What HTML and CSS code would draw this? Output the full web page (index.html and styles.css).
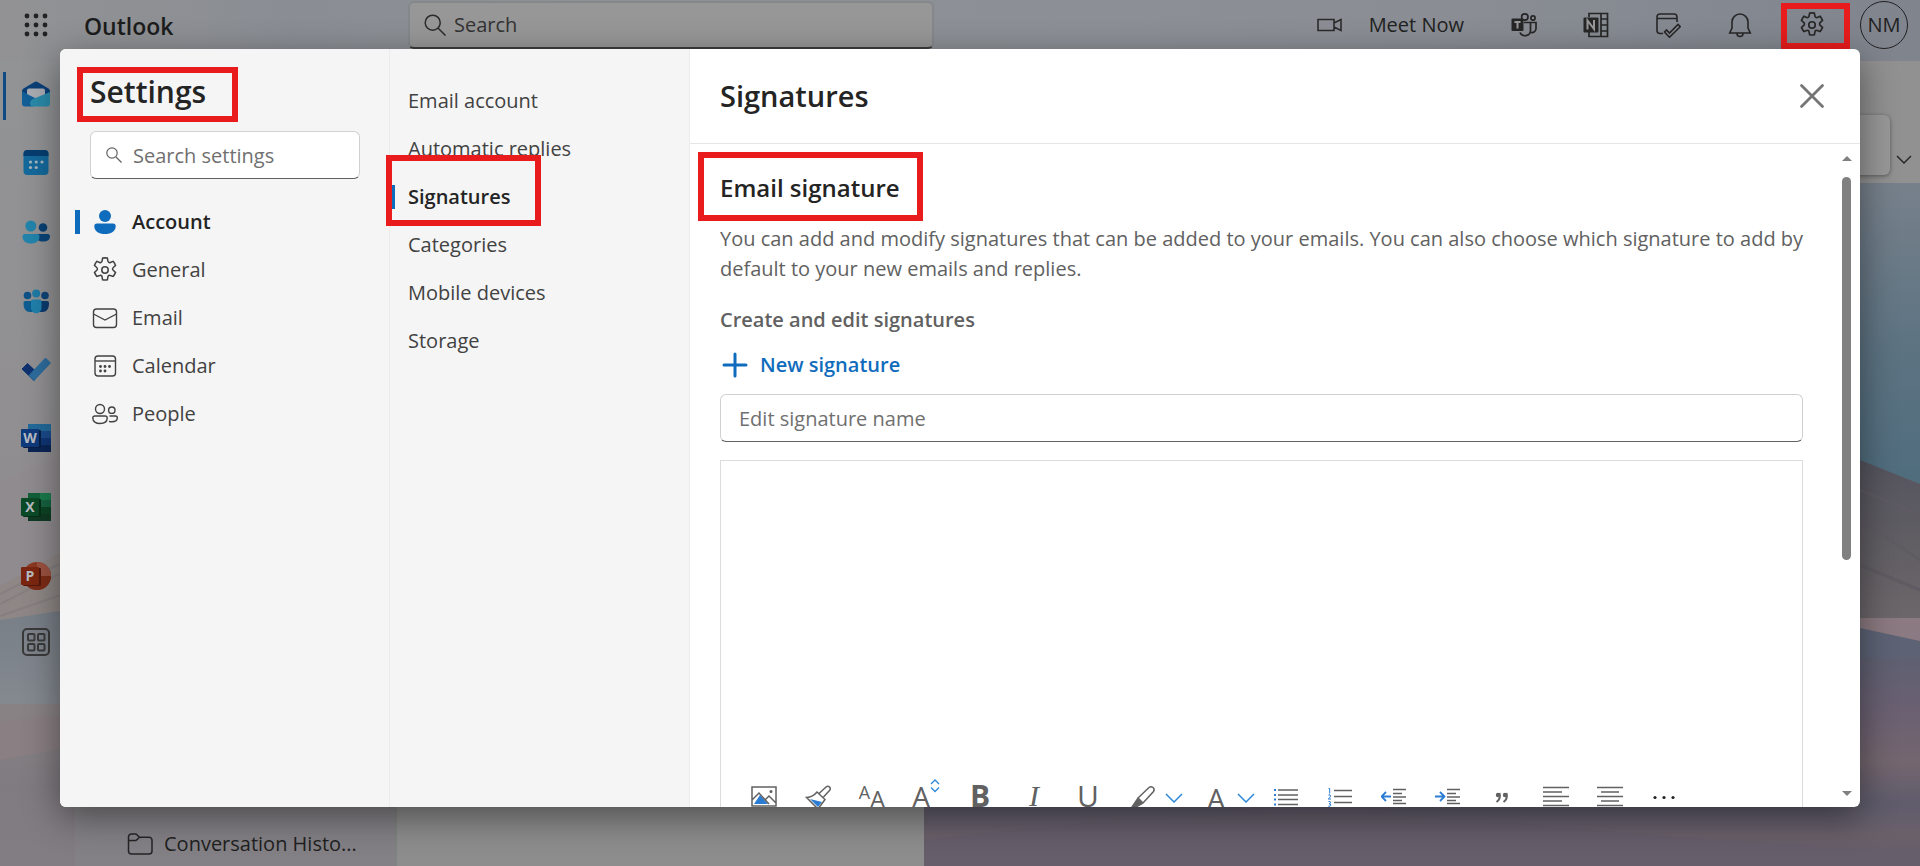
FILE: index.html
```html
<!DOCTYPE html>
<html lang="en">
<head>
    <meta charset="utf-8">
    <title>Outlook - Settings</title>
    <link rel="stylesheet" href="styles.css">
</head>
<body>
    <div class="app">
        <svg class="wallpaper" viewBox="0 0 1920 866" preserveAspectRatio="none" aria-hidden="true">
            <defs>
                <linearGradient id="sky" x1="0" y1="0" x2="0" y2="1">
                    <stop offset="0" stop-color="#858a95"/>
                    <stop offset="0.22" stop-color="#76808b"/>
                    <stop offset="0.4" stop-color="#5d7382"/>
                    <stop offset="0.55" stop-color="#506d7e"/>
                </linearGradient>
                <linearGradient id="mist" x1="0" y1="0" x2="0" y2="1">
                    <stop offset="0" stop-color="#929496"/>
                    <stop offset="0.65" stop-color="#918f91"/>
                    <stop offset="1" stop-color="#8c888a"/>
                </linearGradient>
                <linearGradient id="lake" x1="0" y1="0" x2="0" y2="1">
                    <stop offset="0" stop-color="#787e87"/>
                    <stop offset="1" stop-color="#858a90"/>
                </linearGradient>
                <linearGradient id="duneRight" x1="0" y1="0" x2="0" y2="1">
                    <stop offset="0" stop-color="#51515c"/>
                    <stop offset="1" stop-color="#6e696b"/>
                </linearGradient>
                <linearGradient id="sand" x1="0" y1="0" x2="0" y2="1">
                    <stop offset="0" stop-color="#8a8385"/>
                    <stop offset="0.5" stop-color="#7f7b80"/>
                    <stop offset="1" stop-color="#827d83"/>
                </linearGradient>
                <linearGradient id="sandRight" x1="0" y1="0" x2="0" y2="1">
                    <stop offset="0" stop-color="#5f6072"/>
                    <stop offset="0.25" stop-color="#6a6072"/>
                    <stop offset="0.5" stop-color="#74666f"/>
                    <stop offset="0.7" stop-color="#5f5c6c"/>
                    <stop offset="0.85" stop-color="#6a606a"/>
                    <stop offset="1" stop-color="#625c6a"/>
                </linearGradient>
            </defs>
            <rect width="1920" height="866" fill="url(#sky)"/>
            <rect width="200" height="640" fill="url(#mist)"/>
            <path d="M0 482L75 450V570L0 600z" fill="#8f8b8e"/>
            <path d="M0 586L75 545V620L0 640z" fill="#8e8786"/>
            <path d="M0 594L75 556M0 604L75 566M0 616L75 590" stroke="#867f80" stroke-width="2" fill="none"/>
            <path d="M0 620L100 605V710H0z" fill="url(#lake)"/>
            <path d="M0 704H200V866H0z" fill="url(#sand)"/>
            <path d="M0 722L75 714V746L0 760z" fill="#8a7f83"/>
            <path d="M1700 430Q1830 440 1860 460L1920 484V640H1700z" fill="url(#duneRight)"/>
            <path d="M1860 490L1920 515M1860 520L1920 560M1860 565L1920 590" stroke="#5f5b63" stroke-width="3" fill="none"/>
            <path d="M1700 618H1920V650H1700z" fill="#8b7a81"/>
            <path d="M1700 610L1860 628L1920 641V670H1700z" fill="#5d6375"/>
            <path d="M900 658H1920V866H900z" fill="url(#sandRight)"/>
            <path d="M924 840Q1250 800 1500 822T1920 852V866H924z" fill="#665e6b"/>
        </svg>

        <header class="topbar">
            <button class="waffle" aria-label="App launcher">
                <svg width="24" height="24" viewBox="0 0 24 24" fill="#222"><circle cx="3" cy="3" r="2.4"/><circle cx="12" cy="3" r="2.4"/><circle cx="21" cy="3" r="2.4"/><circle cx="3" cy="12" r="2.4"/><circle cx="12" cy="12" r="2.4"/><circle cx="21" cy="12" r="2.4"/><circle cx="3" cy="21" r="2.4"/><circle cx="12" cy="21" r="2.4"/><circle cx="21" cy="21" r="2.4"/></svg>
            </button>
            <span class="brand">Outlook</span>
            <label class="top-search">
                <svg width="22" height="22" viewBox="0 0 24 24" fill="none" stroke="#2b2b2b" stroke-width="1.6"><circle cx="9.5" cy="9.5" r="8.2"/><path d="M15.5 15.5l8 8"/></svg>
                <input type="text" placeholder="Search" aria-label="Search">
            </label>
            <button class="meet">
                <svg width="26" height="26" viewBox="0 0 26 26" fill="none" stroke="#2b2b2b" stroke-width="1.6"><path d="M1 7.5h16v11H1zM17 11l7-3.5v11L17 15"/></svg>
                Meet Now
            </button>
            <button class="top-btn" aria-label="Teams">
                <svg width="26" height="26" viewBox="0 0 26 26" fill="none" stroke="#262626" stroke-width="1.7"><circle cx="13.8" cy="5" r="3.2"/><circle cx="22" cy="6" r="2.1"/><path d="M13 10.5h6.500v8a5.500 5.500 0 0 1-10.500 2M19.500 10.500H25v6.500a4 4 0 0 1-5.500 3.200"/><rect x="0.5" y="6.500" width="12" height="12.500" rx="1" fill="#262626" stroke="none"/><path d="M3.500 10h6M6.500 10v6.500" stroke="#999" stroke-width="2"/></svg>
            </button>
            <button class="top-btn" aria-label="OneNote">
                <svg width="26" height="26" viewBox="0 0 26 26" fill="none" stroke="#262626" stroke-width="1.7"><path d="M6 5V1.500h18.500v23H6V20M18 1.500v23M18 7h6.500M18 13h6.500M18 19h6.500"/><rect x="0.5" y="5.500" width="15" height="15" rx="1" fill="#262626" stroke="none"/><path d="M4.500 17.500V8.500l6.500 8.500V8" stroke="#999" stroke-width="2"/></svg>
            </button>
            <button class="top-btn" aria-label="My Day">
                <svg width="26" height="26" viewBox="0 0 26 26" fill="none" stroke="#262626" stroke-width="1.6"><path d="M8 21.500H5a3 3 0 0 1-3-3V5a3 3 0 0 1 3-3h14a3 3 0 0 1 3 3v5M2 6.500h20"/><path d="M9.500 20l2-2 3 3 8.500-8.500 2.200 2.200-10.700 10.500z"/></svg>
            </button>
            <button class="top-btn" aria-label="Notifications">
                <svg width="26" height="26" viewBox="0 0 26 26" fill="none" stroke="#262626" stroke-width="1.6"><path d="M13 2a8 8 0 0 0-8 8v6l-2.300 5h20.600L21 16v-6a8 8 0 0 0-8-8zM10 21.500a3 3 0 0 0 6 0"/></svg>
            </button>
            <button class="top-btn" aria-label="Settings">
                <svg width="26" height="26" viewBox="0.7 0.7 18.6 18.6" fill="none" stroke="#262626" stroke-width="1.2"><circle cx="10" cy="10" r="2.3"/><path d="M8.3 1.5a9 9 0 0 1 3.400 0l.4 2.100a1.200 1.200 0 0 0 1.700 1l2-.8a9 9 0 0 1 1.700 3l-1.600 1.400a1.300 1.300 0 0 0 0 2l1.600 1.500a9 9 0 0 1-1.700 2.900l-2-.7a1.200 1.200 0 0 0-1.700 1l-.4 2.100a9 9 0 0 1-3.400 0l-.4-2.100a1.200 1.200 0 0 0-1.700-1l-2 .7a9 9 0 0 1-1.700-2.900l1.600-1.500a1.300 1.300 0 0 0 0-2L2.500 6.800a9 9 0 0 1 1.700-3l2 .8a1.200 1.200 0 0 0 1.700-1z"/></svg>
                <span class="mark mark-gear"></span>
            </button>
            <button class="top-btn" aria-label="Account manager"><span class="avatar">NM</span></button>
        </header>

        <div class="workspace">
            <nav class="rail" aria-label="Apps">
                <a href="#" class="rail-item active" aria-label="Mail">
                    <svg width="30" height="30" viewBox="0 0 30 30"><path d="M1 12Q1 10.500 2.500 9.500L13.500 3q1.500-1 3 0l11 6.500Q29 10.500 29 12v4H1z" fill="#0a3f78"/><path d="M6 11.500a2 2 0 0 1 2-2h14a2 2 0 0 1 2 2V20H6z" fill="#a9acb2"/><path d="M1 12.500l16 8-5 7H4a3 3 0 0 1-3-3z" fill="#115f97"/><path d="M29 13l-17 7a5 5 0 0 0-2 7.500h16a3 3 0 0 0 3-3z" fill="#2a8aa9"/></svg>
                </a>
                <a href="#" class="rail-item" aria-label="Calendar">
                    <svg width="30" height="30" viewBox="0 0 30 30"><rect x="2.5" y="3" width="25" height="25" rx="4" fill="#14699c"/><path d="M2.500 9V7a4 4 0 0 1 4-4h17a4 4 0 0 1 4 4v2z" fill="#073e70"/><g fill="#a8b4bc"><circle cx="9.5" cy="15" r="1.6"/><circle cx="15.2" cy="15" r="1.6"/><circle cx="21" cy="15" r="1.6"/><circle cx="9.5" cy="20.500" r="1.6"/><circle cx="15.2" cy="20.500" r="1.6"/></g></svg>
                </a>
                <a href="#" class="rail-item" aria-label="People">
                    <svg width="30" height="30" viewBox="0 -2 30 30"><circle cx="22" cy="9.500" r="4.300" fill="#0a4173"/><path d="M16 16h10.500a2.500 2.500 0 0 1 2.500 2.500c0 3-2.500 5-7 5s-6-2-6-5z" fill="#0a4478"/><circle cx="9.800" cy="8" r="5.500" fill="#2384ab"/><path d="M4 16h12a2.500 2.500 0 0 1 2.500 2.500c0 4.500-3.500 7-8.500 7s-8.500-2.500-8.500-7A2.500 2.500 0 0 1 4 16z" fill="#2384ab"/></svg>
                </a>
                <a href="#" class="rail-item" aria-label="Groups">
                    <svg width="30" height="30" viewBox="0 -1 30 30"><circle cx="6.500" cy="9.500" r="3.800" fill="#0d5288"/><circle cx="24" cy="9.500" r="3.800" fill="#0d4478"/><path d="M2.500 17a2 2 0 0 1 2-2H12v11H9c-4 0-6.500-3-6.500-9z" fill="#0f5d92"/><path d="M28 17a2 2 0 0 0-2-2h-8v11h3.500c4 0 6.500-3 6.500-9z" fill="#0a3a6e"/><circle cx="15.2" cy="7.500" r="4" fill="#1e7ba5"/><path d="M10 15.500a2 2 0 0 1 2-2h6.500a2 2 0 0 1 2 2V22a5 5 0 0 1-10.500 0z" fill="#1f80ab"/></svg>
                </a>
                <a href="#" class="rail-item" aria-label="To Do">
                    <svg width="30" height="30" viewBox="0 0 30 30"><path d="M6.500 9.500l8.500 8-2 9L1 15z" fill="#0f3270" stroke="#0f3270" stroke-linejoin="round"/><path d="M24.500 4L29.500 9 13 26.500 8 21.500z" fill="#2e6c9c" stroke="#2e6c9c" stroke-linejoin="round"/></svg>
                </a>
                <a href="#" class="rail-item" aria-label="Word">
                    <svg class="office" width="30" height="30" viewBox="0 0 30 30"><rect x="7" y="1" width="23" height="7" fill="#236a9a"/><rect x="7" y="8" width="23" height="7" fill="#1a4a8a"/><rect x="7" y="15" width="23" height="7" fill="#0f3675"/><rect x="7" y="22" width="23" height="7" fill="#0a2556"/><rect x="2" y="7" width="18" height="18" rx="1" fill="#082047"/><rect x="0" y="6" width="18" height="18" rx="1" fill="#0f3a7c"/><text x="9" y="20" text-anchor="middle">W</text></svg>
                </a>
                <a href="#" class="rail-item" aria-label="Excel">
                    <svg class="office" width="30" height="30" viewBox="0 0 30 30"><rect x="7" y="1" width="12" height="28" fill="#12603a"/><rect x="19" y="1" width="11" height="7" fill="#1c7a4c"/><rect x="19" y="8" width="11" height="7" fill="#166240"/><rect x="7" y="15" width="23" height="7" fill="#0c4424"/><rect x="7" y="22" width="23" height="7" fill="#0f3a22"/><rect x="2" y="7" width="18" height="18" rx="1" fill="#06301a"/><rect x="0" y="6" width="18" height="18" rx="1" fill="#0b4a27"/><text x="9" y="20" text-anchor="middle">X</text></svg>
                </a>
                <a href="#" class="rail-item" aria-label="PowerPoint">
                    <svg class="office" width="30" height="30" viewBox="0 0 30 30"><circle cx="16" cy="15" r="14" fill="#8c3a22"/><path d="M16 1a14 14 0 0 1 14 14H16z" fill="#9c5240"/><path d="M30 15a14 14 0 0 1-28 0z" fill="#7c2c16"/><rect x="2" y="7" width="18" height="18" rx="1" fill="#54190c"/><rect x="0" y="6" width="18" height="18" rx="1" fill="#7c2611"/><text x="9" y="20" text-anchor="middle">P</text></svg>
                </a>
                <a href="#" class="rail-item more" aria-label="More apps">
                    <svg width="30" height="30" viewBox="0 0 30 30" fill="none" stroke="#3a3a3a" stroke-width="2"><rect x="2" y="2" width="26" height="26" rx="4"/><rect x="7" y="7" width="6.5" height="6.5" rx="1"/><rect x="17" y="7" width="6.5" height="6.5" rx="1"/><rect x="7" y="17" width="6.5" height="6.5" rx="1"/><rect x="17" y="17" width="6.5" height="6.5" rx="1"/></svg>
                </a>
            </nav>
            <div class="mailbox">
                <div class="ribbon">
                    <div class="ribbon-card"></div>
                    <button class="ribbon-toggle" aria-label="Ribbon options">
                        <svg width="16" height="10" viewBox="0 0 16 10" fill="none" stroke="#222" stroke-width="1.4"><path d="M1 1l7 7 7-7"/></svg>
                    </button>
                </div>
                <div class="panes">
                    <aside class="folders">
                        <a href="#" class="folder">
                            <svg width="26" height="24" viewBox="0 0 26 24" fill="none" stroke="#242424" stroke-width="1.5"><path d="M1.500 5a3 3 0 0 1 3-3h4.500l3.500 3.200H22a3 3 0 0 1 3 3V19a3 3 0 0 1-3 3H4.500a3 3 0 0 1-3-3zM1.500 8.500H9l3.500-3.300"/></svg>
                            <span>Conversation Histo...</span>
                        </a>
                    </aside>
                    <section class="messages"></section>
                </div>
            </div>
        </div>
    </div>

    <div class="modal" role="dialog" aria-label="Settings">
        <aside class="settings-nav">
            <h1>Settings<span class="mark mark-settings"></span></h1>
            <label class="settings-search">
                <svg width="16" height="16" viewBox="0 0 16 16" fill="none" stroke="#616161" stroke-width="1.2"><circle cx="6" cy="6" r="5.2"/><path d="M10 10l5.500 5.500"/></svg>
                <input type="text" placeholder="Search settings" aria-label="Search settings">
            </label>
            <nav>
                <a href="#" class="nav-item active">
                    <svg width="26" height="26" viewBox="0 0 26 26" fill="#0f6cbd"><circle cx="13" cy="7" r="6"/><path d="M5 14.500h16a2.700 2.700 0 0 1 2.700 2.700c0 5-4.700 7.800-10.700 7.800S2.300 22.200 2.300 17.200A2.700 2.700 0 0 1 5 14.500z"/></svg>
                    Account
                </a>
                <a href="#" class="nav-item">
                    <svg width="26" height="26" viewBox="0.7 0.7 18.6 18.6" fill="none" stroke="#424242" stroke-width="1.1"><circle cx="10" cy="10" r="2.3"/><path d="M8.3 1.5a9 9 0 0 1 3.400 0l.4 2.100a1.200 1.200 0 0 0 1.700 1l2-.8a9 9 0 0 1 1.700 3l-1.600 1.400a1.300 1.300 0 0 0 0 2l1.600 1.500a9 9 0 0 1-1.700 2.900l-2-.7a1.200 1.200 0 0 0-1.700 1l-.4 2.100a9 9 0 0 1-3.400 0l-.4-2.100a1.200 1.200 0 0 0-1.700-1l-2 .7a9 9 0 0 1-1.700-2.900l1.600-1.500a1.300 1.300 0 0 0 0-2L2.500 6.800a9 9 0 0 1 1.700-3l2 .8a1.200 1.200 0 0 0 1.700-1z"/></svg>
                    General
                </a>
                <a href="#" class="nav-item">
                    <svg width="26" height="26" viewBox="0 0 26 26" fill="none" stroke="#424242" stroke-width="1.4"><rect x="1.5" y="4" width="23" height="18.500" rx="3"/><path d="M1.500 9L13 15l11.500-6"/></svg>
                    Email
                </a>
                <a href="#" class="nav-item">
                    <svg width="26" height="26" viewBox="0 0 26 26" fill="none" stroke="#424242" stroke-width="1.4"><rect x="3" y="3" width="20.500" height="20" rx="3"/><path d="M3 8h20.500"/><g fill="#424242" stroke="none"><circle cx="8.5" cy="13.500" r="1.4"/><circle cx="13" cy="13.500" r="1.4"/><circle cx="17.500" cy="13.500" r="1.4"/><circle cx="8.500" cy="18" r="1.4"/><circle cx="13" cy="18" r="1.4"/></g></svg>
                    Calendar
                </a>
                <a href="#" class="nav-item">
                    <svg width="26" height="26" viewBox="0 0 26 26" fill="none" stroke="#424242" stroke-width="1.4"><circle cx="8" cy="8" r="4.500"/><circle cx="19.800" cy="9.200" r="3.200"/><path d="M2.800 15h10.400a2 2 0 0 1 2 2c0 3.500-3 5.500-7.200 5.500S.8 20.500.8 17a2 2 0 0 1 2-2zM17.500 15h6a1.800 1.800 0 0 1 1.800 1.800c0 2.500-2 4-5.300 4a8 8 0 0 1-3-.5"/></svg>
                    People
                </a>
            </nav>
        </aside>

        <nav class="sub-nav" aria-label="Account settings">
            <a href="#">Email account</a>
            <a href="#">Automatic replies</a>
            <a href="#" class="active">Signatures<span class="mark mark-signatures"></span></a>
            <a href="#">Categories</a>
            <a href="#">Mobile devices</a>
            <a href="#">Storage</a>
        </nav>

        <main class="panel">
            <div class="panel-head">
                <h2>Signatures</h2>
                <button class="close" aria-label="Close">
                    <svg width="26" height="26" viewBox="0 0 26 26" fill="none" stroke="#757575" stroke-width="2.8" stroke-linecap="round"><path d="M2.500 2.500l21 21M23.500 2.500l-21 21"/></svg>
                </button>
            </div>
            <div class="panel-body">
                <div class="content">
                    <h3>Email signature<span class="mark mark-email"></span></h3>
                    <p>You can add and modify signatures that can be added to your emails. You can also choose which signature to add by default to your new emails and replies.</p>
                    <h4>Create and edit signatures</h4>
                    <button class="new-signature">
                        <svg width="26" height="26" viewBox="0 0 26 26" fill="none" stroke="#0f6cbd" stroke-width="3" stroke-linecap="round"><path d="M13 2v22M2 13h22"/></svg>
                        New signature
                    </button>
                    <input class="signature-name" type="text" placeholder="Edit signature name" aria-label="Edit signature name">
                    <div class="editor">
                        <textarea aria-label="Signature"></textarea>
                        <div class="toolbar">
                            <button aria-label="Insert picture"><svg width="26" height="26" viewBox="0 0 26 26" fill="none" stroke="#616161" stroke-width="1.5"><path d="M3 19l6-9 8 9z" fill="#2b7cd3" stroke="none"/><path d="M1 2h24v19H1zM1 15l7-7 10 11M14 15l4-4 7 7"/><circle cx="20" cy="6.500" r=".8"/></svg></button>
                            <button aria-label="Format painter"><svg width="26" height="26" viewBox="0 0 26 26" fill="none" stroke="#616161" stroke-width="1.5"><path d="M5 14l12 3-4 5z" fill="#2b7cd3" stroke="none"/><path d="M12 7l8 7.500-7 9.500L1.500 12.500Q8 12 12 7zM14 8.500l7-6.500q2-1.500 3.500 0t0 3.500l-6 6.500"/></svg></button>
                            <button class="glyph" aria-label="Font"><span class="font-s">A</span><span class="font-m">A</span></button>
                            <button class="glyph" aria-label="Font size"><span class="font-l">A</span><svg class="size-arrows" width="10" height="14" viewBox="0 0 10 14" fill="none" stroke="#2b88d8" stroke-width="1.3"><path d="M1 5l4-4 4 4M1 8.500l4 4 4-4"/></svg></button>
                            <button class="glyph bold" aria-label="Bold">B</button>
                            <button class="glyph italic" aria-label="Italic">I</button>
                            <button class="glyph" aria-label="Underline">U</button>
                            <button class="wide" aria-label="Highlight"><svg width="26" height="26" viewBox="0 0 26 26" fill="none" stroke="#616161" stroke-width="1.5"><path d="M7 13L18 2.500q2-1.500 4 0t.5 4L12 18zM7 13l5 5"/><path d="M6.500 14l4.500 4.500L5 22H1z" fill="#616161"/></svg><svg width="18" height="10" viewBox="0 0 18 10" fill="none" stroke="#2b88d8" stroke-width="1.5"><path d="M1 1l8 8 8-8"/></svg></button>
                            <button class="wide" aria-label="Font color"><span class="font-l">A</span><svg width="18" height="10" viewBox="0 0 18 10" fill="none" stroke="#2b88d8" stroke-width="1.5"><path d="M1 1l8 8 8-8"/></svg></button>
                            <button aria-label="Bullets"><svg width="26" height="26" viewBox="0 0 26 26" fill="none" stroke="#616161" stroke-width="1.5"><path d="M5 5h20M5 10h20M5 14.500h20M5 19.500h20"/><path d="M1 5h2M1 10h2M1 14.500h2M1 19.500h2" stroke="#2b7cd3" stroke-width="2"/></svg></button>
                            <button aria-label="Numbering"><svg width="26" height="26" viewBox="0 0 26 26" fill="none" stroke="#616161" stroke-width="1.5"><path d="M7 5.500h18M7 11.500h18M7 17.500h18"/><path d="M1.500 3.500h1.200v5M1.300 10q2.500-.8 2.200 1t-2.300 3h2.800M1.500 16.500q2.500-.3 2 1.200t-1.500 1q2 0 1.800 1.500t-2.500 1" stroke="#2b7cd3" stroke-width="1"/></svg></button>
                            <button aria-label="Decrease indent"><svg width="26" height="26" viewBox="0 0 26 26" fill="none" stroke="#616161" stroke-width="1.5"><path d="M12 4.500h13M12 8.500h9M12 12h13M12 15.500h9M12 18.500h13"/><path d="M10 11.500H.5M5 7L.5 11.500 5 16" stroke="#2b7cd3" stroke-width="1.8"/></svg></button>
                            <button aria-label="Increase indent"><svg width="26" height="26" viewBox="0 0 26 26" fill="none" stroke="#616161" stroke-width="1.5"><path d="M12 4.500h13M12 8.500h9M12 12h13M12 15.500h9M12 18.500h13"/><path d="M0 11.500h9.500M5 7l4.500 4.500L5 16" stroke="#2b7cd3" stroke-width="1.8"/></svg></button>
                            <button aria-label="Quote"><svg width="26" height="26" viewBox="0 0 26 26" fill="none" stroke="#616161" stroke-width="2"><circle cx="9" cy="10" r="2.2" fill="#616161" stroke="none"/><path d="M10.500 8q1.500 6-3 9"/><circle cx="16" cy="10" r="2.2" fill="#616161" stroke="none"/><path d="M17.500 8q1.500 6-3 9"/></svg></button>
                            <button aria-label="Align left"><svg width="26" height="26" viewBox="0 0 26 26" fill="none" stroke="#616161" stroke-width="1.5"><path d="M0 2.500h26M0 7h19M0 11.500h26M0 16h19M0 20.500h26"/></svg></button>
                            <button aria-label="Align center"><svg width="26" height="26" viewBox="0 0 26 26" fill="none" stroke="#616161" stroke-width="1.5"><path d="M0 2.500h26M4 7h18M0 11.500h26M4 16h18M0 20.500h26"/></svg></button>
                            <button aria-label="More options"><svg width="26" height="26" viewBox="0 0 26 26" fill="#222"><circle cx="4" cy="12.500" r="1.6"/><circle cx="13" cy="12.500" r="1.6"/><circle cx="22" cy="12.500" r="1.6"/></svg></button>
                        </div>
                    </div>
                </div>
                <div class="scrollbar" aria-hidden="true">
                    <span class="arrow-up"></span>
                    <span class="track"><span class="thumb"></span></span>
                    <span class="arrow-down"></span>
                </div>
            </div>
        </main>
    </div>
</body>
</html>
```

FILE: styles.css
```css
* {
    box-sizing: border-box;
}
html, body {
    height: 100%;
}
body {
    margin: 0;
    overflow: hidden;
    font-family: "Segoe UI", "Open Sans", "Noto Sans", sans-serif;
    font-size: 20px;
    line-height: 30px;
    color: #424242;
}
a {
    color: inherit;
    text-decoration: none;
}
button, input, textarea {
    font: inherit;
    color: inherit;
}
button {
    padding: 0;
    border: none;
    background: none;
    cursor: pointer;
}
input {
    min-width: 0;
    border: none;
    outline: none;
    background: none;
    padding: 0;
}
svg {
    flex: none;
    display: block;
}

/* page behind the dialog */
.app {
    position: relative;
    height: 100%;
    display: flex;
    flex-direction: column;
}
.wallpaper {
    position: absolute;
    inset: 0;
    width: 100%;
    height: 100%;
    z-index: -1;
}
.topbar {
    display: flex;
    align-items: flex-start;
    height: 61px;
    flex: none;
    padding-top: 1px;
    background: linear-gradient(to right, #929294 0, #8a8e94 15%, #8d9095 30%, #8c9096 60%, #8a8e94 75%, #80848d 100%);
    color: #222;
}
.topbar button {
    height: 48px;
}
.waffle {
    width: 71px;
    display: flex;
    align-items: center;
    justify-content: center;
}
.brand {
    width: 337px;
    padding: 10px 0 0 13px;
    font-size: 23px;
    font-weight: 600;
    color: #1c1c1c;
}
.top-search {
    display: flex;
    align-items: center;
    gap: 8px;
    width: 526px;
    height: 48px;
    padding: 0 16px 0 14px;
    background: #979797;
    border: 2px solid #85888b;
    border-bottom-color: #3c3c3c;
    border-radius: 6px;
}
.top-search input {
    flex: 1;
}
.top-search input::placeholder {
    color: #333;
    opacity: 1;
}
.meet {
    display: flex;
    align-items: center;
    gap: 26px;
    margin-left: auto;
    margin-right: 24px;
}
.top-btn {
    position: relative;
    width: 72px;
    display: flex;
    align-items: center;
    justify-content: center;
    color: #222;
}
.avatar {
    width: 48px;
    height: 48px;
    border: 1px solid #222;
    border-radius: 50%;
    line-height: 46px;
}
.workspace {
    flex: 1;
    min-height: 0;
    display: flex;
}
.rail {
    width: 75px;
    display: flex;
    flex-direction: column;
}
.rail-item {
    display: flex;
    align-items: center;
    height: 69px;
    padding-left: 21px;
}
.rail-item.active {
    height: 66px;
    padding-left: 18px;
    margin-left: 3px;
    background: linear-gradient(#0e4a84, #0e4a84) 0 11px / 3px 48px no-repeat;
}
.rail-item.more {
    height: 64px;
}
.office text {
    font-size: 14px;
    font-weight: 700;
    fill: #b8bcc2;
}
.mailbox {
    flex: 1;
    display: flex;
    flex-direction: column;
}
.ribbon {
    height: 122px;
    display: flex;
    align-items: center;
    background: #919191;
}
.ribbon-card {
    flex: 1;
    height: 60px;
    margin-top: 46px;
    border-radius: 6px;
    background: #989898;
    box-shadow: 0 1px 4px rgba(0, 0, 0, 0.4);
}
.ribbon-toggle {
    width: 30px;
    padding: 76px 0 0 6px;
}
.panes {
    flex: 1;
    display: flex;
}
.folders {
    width: 322px;
    display: flex;
    align-items: flex-end;
    background: #838185;
    border-right: 2px solid #808381;
}
.folder {
    display: flex;
    align-items: center;
    gap: 11px;
    padding: 0 0 7px 52px;
    color: #1f1f1f;
    white-space: nowrap;
}
.messages {
    width: 527px;
    background: #8c8d8c;
}

/* settings dialog */
.modal {
    position: absolute;
    top: 49px;
    right: 60px;
    bottom: 59px;
    left: 60px;
    display: flex;
    border-radius: 6px;
    background: #fff;
    box-shadow: 0 10px 36px rgba(0, 0, 0, 0.45);
}
.settings-nav {
    width: 330px;
    flex: none;
    padding: 20px 29px 0 30px;
    background: #f5f5f5;
    border-right: 1px solid #ececec;
    border-radius: 6px 0 0 6px;
}
h1, h2, h3, h4, p {
    margin: 0;
}
h1, h2, h3 {
    color: #242424;
    font-weight: 600;
}
h1 {
    position: relative;
    font-size: 30px;
    line-height: 46px;
}
.settings-search {
    display: flex;
    align-items: center;
    gap: 11px;
    height: 48px;
    margin: 16px 0 19px;
    padding: 0 15px;
    background: #fff;
    border: 1px solid #d1d1d1;
    border-bottom-color: #616161;
    border-radius: 6px;
}
.settings-search input {
    flex: 1;
    padding-top: 2px;
}
input::placeholder {
    color: #707070;
    opacity: 1;
}
.nav-item {
    display: flex;
    align-items: center;
    gap: 14px;
    height: 48px;
    padding-left: 17px;
    margin-left: -15px;
}
.active {
    color: #242424;
    font-weight: 600;
}
.nav-item.active {
    background: linear-gradient(#0f6cbd, #0f6cbd) 0 12px / 5px 24px no-repeat;
}
.sub-nav {
    width: 300px;
    flex: none;
    padding-top: 28px;
    background: #f5f5f5;
    border-right: 1px solid #ececec;
}
.sub-nav a {
    position: relative;
    display: block;
    height: 48px;
    padding-left: 18px;
    line-height: 48px;
}
.sub-nav .active {
    background: linear-gradient(#0f6cbd, #0f6cbd) 0 12px / 5px 24px no-repeat;
}
.panel {
    flex: 1;
    min-width: 0;
    display: flex;
    flex-direction: column;
    overflow: hidden;
    border-radius: 0 6px 6px 0;
}
.panel-head {
    flex: none;
    display: flex;
    align-items: center;
    justify-content: space-between;
    height: 95px;
    padding: 0 35px 0 30px;
    border-bottom: 1px solid #e6e6e6;
}
h2 {
    font-size: 29px;
    line-height: 40px;
}
.panel-body {
    flex: 1;
    min-height: 0;
    display: flex;
}
.content {
    flex: 1;
    min-width: 0;
    overflow: hidden;
    padding: 26px 30px 0 30px;
}
h3 {
    position: relative;
    font-size: 24px;
    line-height: 36px;
    margin-bottom: 18px;
}
p {
    margin-right: -12px;
    color: #616161;
}
h4 {
    margin: 21px 0 15px;
    color: #616161;
    font-size: 20px;
    font-weight: 600;
}
.new-signature {
    display: flex;
    align-items: center;
    gap: 12px;
    height: 30px;
    padding-left: 2px;
    color: #0f6cbd;
    font-weight: 600;
}
.signature-name {
    display: block;
    width: 100%;
    height: 48px;
    margin: 14px 0 18px;
    padding: 0 18px;
    border: 1px solid #d1d1d1;
    border-bottom-color: #616161;
    border-radius: 6px;
}
.editor {
    border: 1px solid #dcdcdc;
}
.editor textarea {
    display: block;
    width: 100%;
    height: 308px;
    padding: 18px;
    border: none;
    outline: none;
    resize: none;
}
.toolbar {
    display: flex;
    height: 58px;
    padding-left: 16px;
    color: #616161;
}
.toolbar button {
    display: flex;
    align-items: center;
    justify-content: center;
    flex: none;
    width: 54px;
}
.toolbar .wide {
    width: 72px;
    gap: 8px;
    justify-content: flex-end;
    padding-right: 4px;
}
.toolbar .wide .font-l {
    width: 26px;
}
.toolbar .glyph {
    font-size: 30px;
    padding-bottom: 4px;
}
.toolbar .bold {
    font-weight: 700;
}
.toolbar .italic {
    font-family: "Liberation Serif", serif;
    font-style: italic;
}
.toolbar .font-s {
    font-size: 18px;
    padding-bottom: 8px;
}
.toolbar .font-m {
    font-size: 24px;
    padding-top: 6px;
}
.toolbar .font-l {
    font-size: 28px;
}
.size-arrows {
    margin-bottom: 20px;
}
.scrollbar {
    width: 27px;
    flex: none;
    display: flex;
    flex-direction: column;
    align-items: center;
    padding: 12px 9px 11px;
}
.arrow-up, .arrow-down {
    border: 5px solid transparent;
}
.arrow-up {
    border-top: none;
    border-bottom-color: #808080;
}
.arrow-down {
    border-bottom: none;
    border-top-color: #808080;
}
.track {
    flex: 1;
    width: 9px;
    padding: 16px 0;
}
.thumb {
    display: block;
    height: 64%;
    border-radius: 5px;
    background: #808080;
}

/* red callout boxes */
.mark {
    position: absolute;
    border: 6px solid #e81c1c;
    pointer-events: none;
}
.mark-gear {
    top: 2px;
    left: 5px;
    width: 69px;
    height: 46px;
}
.mark-settings {
    top: -2px;
    left: -13px;
    width: 161px;
    height: 55px;
}
.mark-signatures {
    top: 50%;
    left: -4px;
    width: 155px;
    height: 71px;
    margin-top: -42px;
}
.mark-email {
    top: -18px;
    left: -22px;
    width: 225px;
    height: 69px;
}
```
